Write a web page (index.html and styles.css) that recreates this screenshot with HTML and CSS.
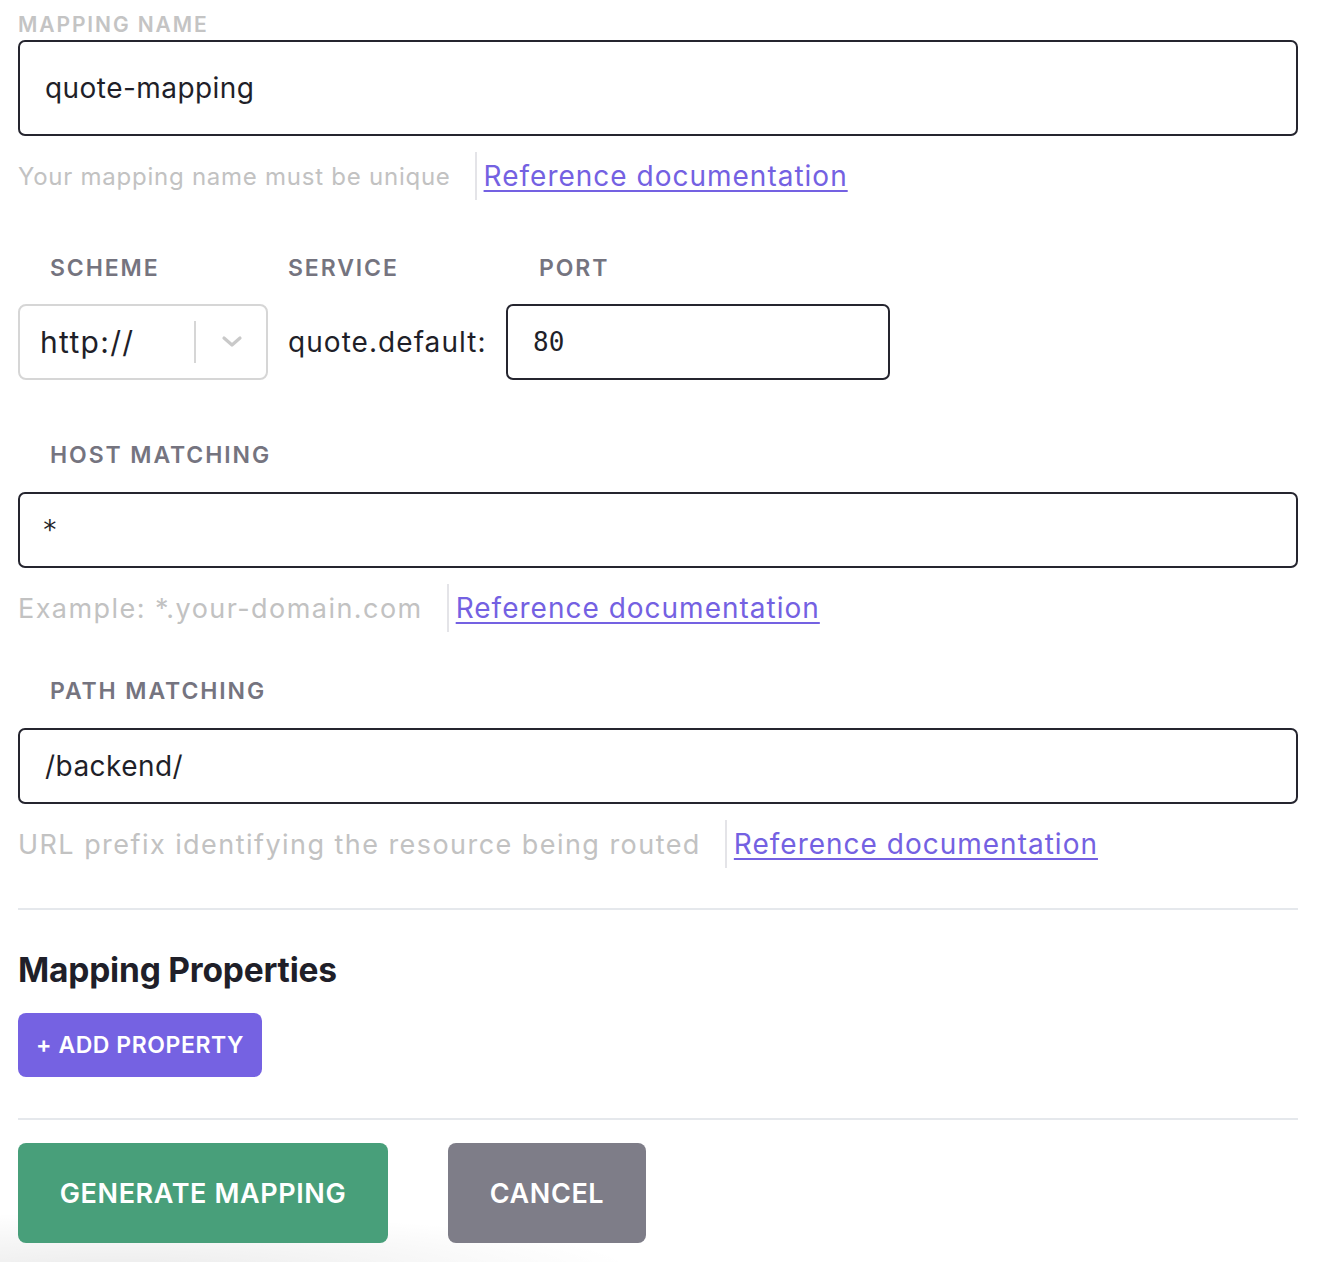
FILE: index.html
```html
<!DOCTYPE html>
<html lang="en">
<head>
<meta charset="utf-8">
<title>Mapping</title>
<link rel="stylesheet" href="styles.css">
</head>
<body>
<form class="form">
  <div class="top-label">MAPPING NAME</div>
  <div class="input input-tall"><span class="value">quote-mapping</span></div>
  <div class="helper">
    <span class="hint hint-small">Your mapping name must be unique</span>
    <span class="sep"></span>
    <a class="doc" href="#">Reference documentation</a>
  </div>

  <div class="target">
    <div class="label pad-scheme">SCHEME</div>
    <div class="label">SERVICE</div>
    <div class="label pad-port">PORT</div>
    <div class="select">
      <span class="select-value">http://</span>
      <span class="select-sep"></span>
      <svg class="chevron" width="22" height="14" viewBox="0 0 22 14"><path d="M3 3 L11 10 L19 3" fill="none" stroke="#c9c9c9" stroke-width="3.2" stroke-linecap="round" stroke-linejoin="round"/></svg>
    </div>
    <div class="service">quote.default:</div>
    <div class="input input-short"><span class="mono">80</span></div>
  </div>

  <div class="label section-label host-label">HOST MATCHING</div>
  <div class="input input-short input-star"><span class="mono">*</span></div>
  <div class="helper">
    <span class="hint">Example: *.your-domain.com</span>
    <span class="sep"></span>
    <a class="doc" href="#">Reference documentation</a>
  </div>

  <div class="label section-label path-label">PATH MATCHING</div>
  <div class="input input-short"><span class="value">/backend/</span></div>
  <div class="helper">
    <span class="hint">URL prefix identifying the resource being routed</span>
    <span class="sep"></span>
    <a class="doc" href="#">Reference documentation</a>
  </div>

  <hr class="rule rule-1">
  <h2 class="heading">Mapping Properties</h2>
  <button type="button" class="btn btn-add">+ ADD PROPERTY</button>
  <hr class="rule rule-2">
  <div class="actions">
    <button type="button" class="btn btn-big btn-generate">GENERATE MAPPING</button>
    <button type="button" class="btn btn-big btn-cancel">CANCEL</button>
  </div>
</form>
</body>
</html>
```

FILE: styles.css
```css
html {
  background: #ffffff;
}
body {
  margin: 0;
  min-height: 1262px;
  font-family: "Inter", "Noto Sans", sans-serif;
  color: #1f1f29;
  background: radial-gradient(ellipse 520px 60px at 120px 1272px, rgba(0,0,0,0.08), rgba(0,0,0,0) 100%);
  overflow: hidden;
}
.form {
  width: 1280px;
  padding-left: 18px;
  padding-top: 11px;
  box-sizing: content-box;
}
.top-label {
  font-size: 21px;
  font-weight: 600;
  color: #c4c4c4;
  letter-spacing: 1.9px;
  line-height: 28px;
  height: 29px;
}
.input {
  box-sizing: border-box;
  border: 2px solid #25252f;
  border-radius: 7px;
  display: flex;
  align-items: center;
  padding-left: 25px;
  background: #fff;
}
.input-star {
  padding-left: 22px;
}
.input-tall {
  height: 96px;
}
.input-short {
  height: 76px;
}
.value {
  font-size: 28px;
  letter-spacing: 0.45px;
  color: #1f1f29;
}
.mono {
  font-family: "DejaVu Sans Mono", "Liberation Mono", monospace;
  font-size: 26px;
  color: #1f1f29;
}
.helper {
  display: flex;
  align-items: center;
  height: 48px;
  margin-top: 16px;
}
.hint {
  font-size: 27px;
  color: #c2c2c2;
  letter-spacing: 1.45px;
}
.hint-small {
  font-size: 24px;
  letter-spacing: 0.75px;
}
.sep {
  width: 2px;
  align-self: stretch;
  background: #e4e4e8;
  margin: 0 7px 0 24px;
}
.doc {
  font-size: 28px;
  color: #7461e2;
  text-decoration: underline;
  text-underline-offset: 4px;
  text-decoration-thickness: 2px;
  letter-spacing: 1px;
}
.label {
  font-size: 23px;
  font-weight: 600;
  color: #75747f;
  letter-spacing: 1.9px;
  line-height: 30px;
}
.target {
  margin-top: 53px;
  display: grid;
  grid-template-columns: 250px 198px 384px;
  column-gap: 20px;
  row-gap: 21px;
  align-items: center;
}
.pad-scheme {
  padding-left: 32px;
}
.pad-port {
  padding-left: 33px;
}
.select {
  box-sizing: border-box;
  height: 76px;
  border: 2px solid #d6d6d6;
  border-radius: 8px;
  display: flex;
  align-items: center;
  padding-left: 20px;
}
.select-value {
  font-size: 30px;
  letter-spacing: 1.3px;
  color: #1f1f29;
  width: 154px;
}
.select-sep {
  width: 2px;
  height: 42px;
  background: #d6d6d6;
}
.chevron {
  margin-left: 25px;
}
.service {
  font-size: 28px;
  letter-spacing: 1.05px;
  color: #1f1f29;
  white-space: nowrap;
}
.section-label {
  padding-left: 32px;
  margin-bottom: 22px;
}
.host-label {
  margin-top: 60px;
}
.path-label {
  margin-top: 44px;
}
.rule {
  border: none;
  height: 2px;
  background: #e5e8ec;
  margin: 0;
}
.rule-1 {
  margin-top: 40px;
}
.heading {
  font-size: 33.5px;
  font-weight: 700;
  color: #1f1f29;
  margin: 40px 0 0;
  line-height: 40px;
  letter-spacing: -0.2px;
}
.btn {
  border: none;
  border-radius: 8px;
  color: #fff;
  font-family: "Inter", "Noto Sans", sans-serif;
  font-weight: 600;
  cursor: pointer;
  display: block;
}
.btn-add {
  margin-top: 23px;
  height: 64px;
  width: 244px;
  background: #7562e2;
  font-size: 23px;
  letter-spacing: 0.55px;
}
.rule-2 {
  margin-top: 41px;
}
.actions {
  display: flex;
  gap: 60px;
  margin-top: 23px;
}
.btn-big {
  height: 100px;
  font-size: 27px;
  letter-spacing: 0.6px;
}
.btn-generate {
  width: 370px;
  background: #489f7a;
}
.btn-cancel {
  width: 198px;
  background: #7e7d88;
}
```
